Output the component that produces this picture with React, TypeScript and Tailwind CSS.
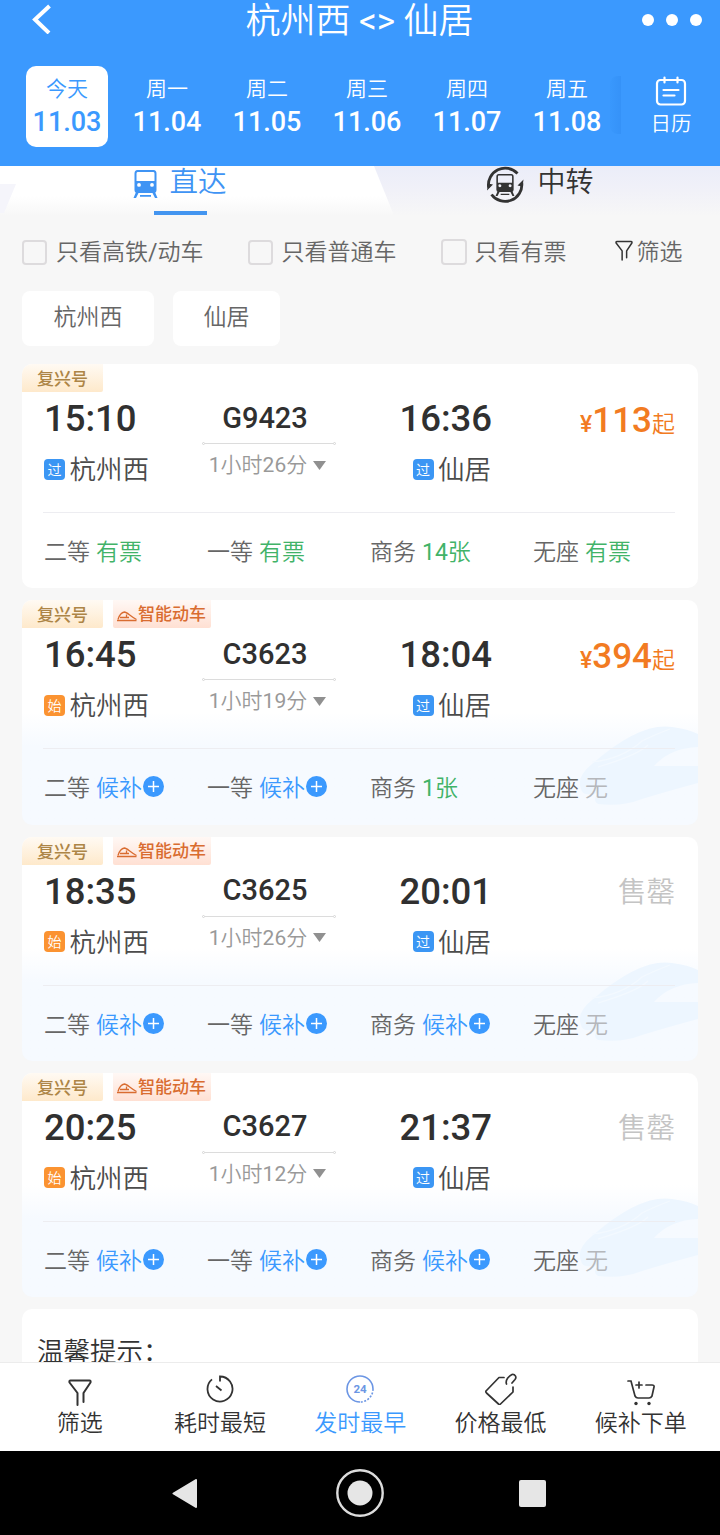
import React, { useState } from "react";

type Seat = { name: string; value: string };

type Train = {
  code: string;
  start: string;
  end: string;
  duration: string;
  origin: "过" | "始";
  smart: boolean;
  price: string | null;
  seats: Seat[];
};

const days = [
  { label: "今天", date: "11.03" },
  { label: "周一", date: "11.04" },
  { label: "周二", date: "11.05" },
  { label: "周三", date: "11.06" },
  { label: "周四", date: "11.07" },
  { label: "周五", date: "11.08" },
];

const trains: Train[] = [
  {
    code: "G9423",
    start: "15:10",
    end: "16:36",
    duration: "1小时26分",
    origin: "过",
    smart: false,
    price: "113",
    seats: [
      { name: "二等", value: "有票" },
      { name: "一等", value: "有票" },
      { name: "商务", value: "14张" },
      { name: "无座", value: "有票" },
    ],
  },
  {
    code: "C3623",
    start: "16:45",
    end: "18:04",
    duration: "1小时19分",
    origin: "始",
    smart: true,
    price: "394",
    seats: [
      { name: "二等", value: "候补" },
      { name: "一等", value: "候补" },
      { name: "商务", value: "1张" },
      { name: "无座", value: "无" },
    ],
  },
  {
    code: "C3625",
    start: "18:35",
    end: "20:01",
    duration: "1小时26分",
    origin: "始",
    smart: true,
    price: null,
    seats: [
      { name: "二等", value: "候补" },
      { name: "一等", value: "候补" },
      { name: "商务", value: "候补" },
      { name: "无座", value: "无" },
    ],
  },
  {
    code: "C3627",
    start: "20:25",
    end: "21:37",
    duration: "1小时12分",
    origin: "始",
    smart: true,
    price: null,
    seats: [
      { name: "二等", value: "候补" },
      { name: "一等", value: "候补" },
      { name: "商务", value: "候补" },
      { name: "无座", value: "无" },
    ],
  },
];

// digits are set one step heavier than the Chinese text around them
function Mixed({ text }: { text: string }) {
  return (
    <span>
      {text.split(/([\d/<>]+)/).map((part, i) =>
        i % 2 === 1 ? (
          <span key={i} className="font-normal">{part}</span>
        ) : (
          part
        )
      )}
    </span>
  );
}

function Header() {
  const [selected, setSelected] = useState(0);

  return (
    <header className="h-[166px] shrink-0 bg-[#3b99fe] text-white">
      <div className="flex h-[40px] items-center justify-between pl-[31px] pr-[18px]">
        <svg className="-mt-[2px] h-[30px] w-[46px]" viewBox="0 0 46 30" fill="none" stroke="currentColor" strokeWidth="4">
          <path d="M18.500 2 4 15.500 18 29" />
        </svg>
        <h1 className="pt-[3px] text-[35px] leading-[40px] whitespace-pre">
          <Mixed text="杭州西 <> 仙居" />
        </h1>
        <div className="flex gap-[12px]">
          <span className="size-[12px] rounded-full bg-white" />
          <span className="size-[12px] rounded-full bg-white" />
          <span className="size-[12px] rounded-full bg-white" />
        </div>
      </div>

      <div className="mt-[26px] flex">
        <div className="flex gap-[18px] pl-[26px]">
          {days.map((day, i) => (
            <button
              key={day.date}
              onClick={() => setSelected(i)}
              className={
                i === selected
                  ? "flex h-[80.500px] w-[82px] flex-col items-center rounded-[10px] bg-white pt-[11px] text-[#3b99fe]"
                  : "flex h-[80.500px] w-[82px] flex-col items-center rounded-[10px] pt-[11px]"
              }
            >
              <span className="text-[21px] leading-[24px]">{day.label}</span>
              <span className="mt-[5px] text-[27px] font-medium leading-[32px]">{day.date}</span>
            </button>
          ))}
        </div>
        <div className="ml-[2px] mt-[10px] h-[58px] w-[11px] rounded-l-[8px] bg-linear-to-r from-[#3998fd] to-[#3592f8]" />
        <button className="ml-[28px] flex w-[44px] flex-col items-center pt-[10px]">
          <svg className="h-[30px] w-[32px]" viewBox="0 0 32 30" fill="none" stroke="currentColor" strokeWidth="2.200" strokeLinecap="round">
            <rect x="2" y="4" width="28" height="24.500" rx="3.500" />
            <path d="M9.500 1.500v5M22.500 1.500v5M8.500 14h15M8.500 19.500h11" />
          </svg>
          <span className="mt-[6px] text-[20.500px] leading-[24px]">日历</span>
        </button>
      </div>
    </header>
  );
}

function TrainIcon({ className }: { className: string }) {
  return (
    <svg className={className} viewBox="0 0 24 28" fill="currentColor">
      <path
        fillRule="evenodd"
        d="M4 0h16q3 0 3 3.500V20q0 3-3 3H4q-3 0-3-3V3.500Q1 0 4 0ZM4 2q-1 0-1 1.500v7.500h18V3.500q0-1.500-1-1.500ZM5.500 13a1.900 1.900 0 1 0 0 3.800 1.900 1.900 0 0 0 0-3.800ZM18.500 13a1.900 1.900 0 1 0 0 3.800 1.900 1.900 0 0 0 0-3.800Z"
      />
      <path d="M2.500 22h3L2.500 28H0ZM18.500 22h3l2.500 6h-2.500ZM6.500 25h11v1.800h-11Z" />
    </svg>
  );
}

function Tabs() {
  return (
    <div className="relative h-[50px] w-full shrink-0 bg-linear-to-b from-[#ebedf9] via-[#f1f1f8] to-[#f7f7f7]">
      {/* slanted plate behind the active tab */}
      <svg className="absolute left-0 top-0 h-[50px] w-[400px]" viewBox="0 0 400 50">
        <defs>
          <linearGradient id="plate" x1="0" x2="0" y1="0" y2="1">
            <stop offset="0.600" stopColor="#fff" />
            <stop offset="1" stopColor="#f7f7f7" />
          </linearGradient>
        </defs>
        <path d="M0 0H374L393 47V50H0Z" fill="url(#plate)" />
        <path d="M0 18H16L4 47H0Z" fill="#f5f5fb" />
      </svg>
      <div className="relative flex">
        <div className="flex w-[360px] flex-col items-center">
          <div className="flex h-[45px] text-[#3f94f4]">
            <TrainIcon className="mt-[4px] h-[28px] w-[25px]" />
            <span className="ml-[11px] pt-[2px] text-[28.500px] leading-[30px]">直达</span>
          </div>
          <span className="h-[4px] w-[53px] bg-[#4395f0]" />
        </div>
        <div className="flex w-[360px] justify-center text-[#333]">
          <div className="grid size-[38px] place-items-center">
            <svg className="col-start-1 row-start-1 size-[38px]" viewBox="0 0 38 38" fill="none" stroke="currentColor" strokeWidth="2.800">
              <path d="M2.600 21.500A16.800 16.800 0 0 1 31.500 7.500" />
              <path d="M35.800 17A16.800 16.800 0 0 1 5.500 28.500" />
              <path d="M1 24.500 2 17.500 7 18.500ZM37.500 13.500 36.500 20.500 31.500 19.500Z" fill="currentColor" stroke="none" />
            </svg>
            <TrainIcon className="col-start-1 row-start-1 h-[22px] w-[20px]" />
          </div>
          <span className="ml-[13px] pt-[2px] text-[28px] leading-[30px]">中转</span>
        </div>
      </div>
    </div>
  );
}

function Funnel({ className }: { className: string }) {
  return (
    <svg className={className} viewBox="0 0 24 27" fill="none" stroke="currentColor" strokeWidth="2" strokeLinejoin="round" strokeLinecap="round">
      <path d="M9.500 26V14L1.500 3.500Q1 1.500 2.500 1.500H21.500Q23 1.500 22.500 3.500L15.500 14V23" />
    </svg>
  );
}

function Filters() {
  return (
    <div className="px-[22px]">
      <div className="flex h-[26px] items-center text-[23px] leading-[26px] text-[#666]">
        <label className="flex w-[225.500px] items-center">
          <span className="mr-[9px] size-[25px] rounded-[4px] border-2 border-[#dddbdd]" />
          <span className="pt-[2px]">
            <Mixed text="只看高铁/动车" />
          </span>
        </label>
        <label className="flex w-[193px] items-center">
          <span className="mr-[9px] size-[25px] rounded-[4px] border-2 border-[#dddbdd]" />
          <span className="pt-[2px]">只看普通车</span>
        </label>
        <label className="flex w-[174px] items-center">
          <span className="mr-[8px] size-[26px] rounded-[4px] border-2 border-[#dddbdd]" />
          <span className="pt-[2px]">只看有票</span>
        </label>
        <span className="flex items-center">
          <Funnel className="mr-[4px] mb-[3px] h-[21px] w-[18px] text-[#333]" />
          <span className="pt-[2px]">筛选</span>
        </span>
      </div>
      <div className="mt-[26px] flex gap-[19px] text-[23px] leading-[54px] text-[#666]">
        <span className="h-[55px] w-[132px] rounded-[8px] bg-white text-center">杭州西</span>
        <span className="h-[55px] w-[107px] rounded-[8px] bg-white text-center">仙居</span>
      </div>
    </div>
  );
}

function Station({ mark, name }: { mark: string; name: string }) {
  return (
    <div className="flex h-[30px] items-center">
      <span
        className={
          mark === "始"
            ? "mr-[4.500px] size-[21px] rounded-[4px] bg-[#fb9331] text-center text-[14px] leading-[23px] text-white"
            : "mr-[4.500px] size-[21px] rounded-[4px] bg-[#3b96f4] text-center text-[14px] leading-[23px] text-white"
        }
      >
        {mark}
      </span>
      <span className="pt-[2px] text-[26.500px] leading-[30px] text-[#4c4c4c]">{name}</span>
    </div>
  );
}

function SeatCell({ seat }: { seat: Seat }) {
  const color =
    seat.value === "候补" ? "text-[#3b99fe]" : seat.value === "无" ? "text-[#b5b7bb]" : "text-[#41b368]";

  return (
    <div className="flex w-[163px] items-center">
      <span>{seat.name}</span>
      <span className={"ml-[6px] " + color}>
        <Mixed text={seat.value} />
      </span>
      {seat.value === "候补" && (
        <svg className="mb-[5px] ml-[1px] size-[21px]" viewBox="0 0 21 21">
          <circle cx="10.500" cy="10.500" r="10.500" fill="#3b99fe" />
          <path d="M10.500 5v11M5 10.500h11" stroke="#fff" strokeWidth="1.500" />
        </svg>
      )}
    </div>
  );
}

function TrainCard({ train }: { train: Train }) {
  return (
    <div
      className={
        train.smart
          ? "relative h-[224.300px] shrink-0 overflow-hidden rounded-[10px] bg-white bg-linear-to-b from-white from-50% to-[#f6faff] to-65%"
          : "relative h-[224.300px] shrink-0 overflow-hidden rounded-[10px] bg-white"
      }
    >
      {train.smart && (
        <svg className="absolute right-0 bottom-0 h-[100px] w-[120px]" viewBox="0 0 120 100" fill="none">
          <path d="M3 64Q-2 52 14 39Q62 -3 94 2Q110 4 120 9V22Q92 23 76 41H120V58Q90 66 64 74Q44 82 20 79Q14 76 20 68Q4 72 3 64Z" fill="#edf6ff" />
          <path d="M14 37Q44 34 64 16Q76 10 92 4M20 42Q60 30 70 20" stroke="#f3f9ff" strokeWidth="1.200" />
        </svg>
      )}
      <div className="relative">
        <div className="flex h-[28px] gap-[10px] text-[17px] font-medium leading-[30px]">
          <span className="w-[81px] rounded-br-[2px] bg-linear-to-b from-[#fffaf3] to-[#fee9cb] text-center text-[#ad8546]">
            复兴号
          </span>
          {train.smart && (
            <span className="flex w-[98px] items-center rounded-b-[2px] bg-linear-to-b from-[#fff8f5] to-[#ffe0d3] pl-[4px] text-[#d96c30]">
              <svg className="mt-[4px] mr-[1px] h-[11px] w-[20px] shrink-0" viewBox="0 0 20 11" fill="none" stroke="currentColor" strokeWidth="1.300">
                <path d="M1 8.500C2 5 4.500 1.500 7.500 1C10 1 13 5 19.500 8.500M3 6.500H12M9.500 3.500V6.500" />
                <path d="M0 9.500h19.500" strokeWidth="1.700" />
              </svg>
              智能动车
            </span>
          )}
        </div>

        <div className="flex pl-[22px] pr-[23px]">
          <div className="flex w-[158px] flex-col">
            <span className="mt-[6px] h-[42px] text-[36.500px] font-medium leading-[42px] text-[#303030]">{train.start}</span>
            <div className="mt-[14px]">
              <Station mark={train.origin} name="杭州西" />
            </div>
          </div>
          <div className="flex w-[134px] flex-col items-center">
            <span className="mt-[8.500px] mr-[8px] h-[34px] text-[29px] font-medium leading-[34px] text-[#303030]">{train.code}</span>
            <div className="mt-[6.500px] flex h-[5px] w-full items-center">
              <span className="size-[3px] rounded-full border border-[#d5d5d5]" />
              <span className="h-px flex-1 bg-[#dcdcdc]" />
              <span className="size-[3px] rounded-full border border-[#d5d5d5]" />
            </div>
            <div className="mt-[6px] mr-[3px] flex items-center text-[21px] leading-[26px] text-[#999]">
              <Mixed text={train.duration} />
              <svg className="ml-[6px] h-[9px] w-[13px]" viewBox="0 0 13 9">
                <path d="M0 0h13L6.500 9Z" fill="#909090" />
              </svg>
            </div>
          </div>
          <div className="flex w-[156px] flex-col items-end">
            <span className="mt-[6px] h-[42px] text-[36.500px] font-medium leading-[42px] text-[#303030]">{train.end}</span>
            <div className="mt-[14px] mr-[1px]">
              <Station mark="过" name="仙居" />
            </div>
          </div>
          <div className="flex h-[42px] flex-1 items-baseline justify-end pt-[7.500px] text-[#f27b22]">
            {train.price ? (
              <>
                <span className="text-[23px] font-medium">¥</span>
                <span className="text-[35px] font-medium leading-[42px]">{train.price}</span>
                <span className="text-[23px]">起</span>
              </>
            ) : (
              <span className="text-[28.500px] leading-[42px] text-[#c4c4c4]">售罄</span>
            )}
          </div>
        </div>

        <div className="mr-[23px] ml-[21px] mt-[28px] h-px bg-[#ededf1]" />

        <div className="mt-[27px] flex pl-[22px] text-[23px] leading-[26px] text-[#666]">
          {train.seats.map((seat) => (
            <SeatCell key={seat.name} seat={seat} />
          ))}
        </div>
      </div>
    </div>
  );
}

function BottomBar() {
  return (
    <nav className="flex h-[89px] shrink-0 border-t border-[#ececec] bg-white pl-[9.500px] text-[23px] leading-[26px] text-[#333]">
      <div className="flex w-[140.300px] flex-col items-center">
        <Funnel className="mt-[16px] h-[27px] w-[24px]" />
        <span className="mt-[4.500px]">筛选</span>
      </div>
      <div className="flex w-[140.300px] flex-col items-center">
        <svg className="mt-[12px] h-[28px] w-[28px]" viewBox="0 0 28 28" fill="none" stroke="currentColor" strokeWidth="1.800">
          <path d="M14 6.500V1.500A12.500 12.500 0 1 1 6 4.400M10 11l5.500 4.500" />
        </svg>
        <span className="mt-[7.500px]">耗时最短</span>
      </div>
      <div className="flex w-[140.300px] flex-col items-center text-[#3b99fe]">
        <svg className="mt-[12px] h-[28px] w-[30px]" viewBox="0 0 30 28" fill="none" stroke="#6c96e4" strokeWidth="1.600">
          <path d="M15 27A13 13 0 1 1 28 14" />
          <path d="M28 14A13 13 0 0 1 15 27" strokeDasharray="2 1.500" />
          <text x="15" y="18" textAnchor="middle" fontSize="11.500" fontWeight="700" fill="#6c96e4" stroke="none">24</text>
        </svg>
        <span className="mt-[7.500px]">发时最早</span>
      </div>
      <div className="flex w-[140.300px] flex-col items-center">
        <svg className="mt-[10px] h-[32px] w-[32px]" viewBox="0 0 32 32" fill="none" stroke="currentColor" strokeWidth="1.700" strokeLinejoin="round" strokeLinecap="round">
          <path d="M19 4.500H14L1 18Q.500 19 1.500 20L13.500 31Q14.500 32 15.500 31L28 19V14" />
          <path d="M21.500 11C20 7 24 3 27 1.500C30 1 32 4 30 6.500L27 10" />
        </svg>
        <span className="mt-[5.500px]">价格最低</span>
      </div>
      <div className="flex w-[140.300px] flex-col items-center">
        <svg className="mt-[16px] h-[27px] w-[28px]" viewBox="0 0 28 27" fill="none" stroke="currentColor" strokeWidth="1.700" strokeLinecap="round">
          <path d="M1 2H4L8 17Q9 19 11 19H22Q24 19 25 17L27 8Q27.500 6 25 6H19M9 6h6M12 3v6" />
          <circle cx="9" cy="24.500" r="1.700" fill="currentColor" stroke="none" />
          <circle cx="22" cy="24.500" r="1.700" fill="currentColor" stroke="none" />
        </svg>
        <span className="mt-[4.500px]">候补下单</span>
      </div>
    </nav>
  );
}

function SystemNav() {
  return (
    <div className="flex h-[84px] shrink-0 items-center bg-black pl-[172px]">
      <svg className="h-[29px] w-[25px]" viewBox="0 0 25 29">
        <path d="M24 1v27L1.500 14.500Z" fill="#e6e6e6" stroke="#e6e6e6" strokeWidth="2" strokeLinejoin="round" />
      </svg>
      <svg className="ml-[139px] size-[48px]" viewBox="0 0 48 48">
        <circle cx="24" cy="24" r="22.700" fill="none" stroke="#dcdcdc" strokeWidth="2.400" />
        <circle cx="24" cy="24" r="12.500" fill="#e6e6e6" />
      </svg>
      <span className="ml-[135px] size-[27px] rounded-[2px] bg-[#e6e6e6]" />
    </div>
  );
}

export default function App() {
  return (
    <main className="flex h-[1535px] w-[720px] flex-col overflow-hidden bg-[#f7f7f7] font-['Roboto','Noto_Sans_CJK_SC',sans-serif] font-[350]">
      <Header />
      <div className="flex h-[1196px] flex-col overflow-hidden">
        <Tabs />
        <div className="mt-[23px]">
          <Filters />
        </div>
        <div className="mt-[18px] flex flex-col gap-[12px] px-[22px]">
          {trains.map((train) => (
            <TrainCard key={train.code} train={train} />
          ))}
          <div className="h-[80px] shrink-0 rounded-t-[10px] bg-white pl-[15px] pt-[28px] text-[26.500px] leading-[30px] text-[#333]">
            温馨提示：
          </div>
        </div>
      </div>
      <BottomBar />
      <SystemNav />
    </main>
  );
}
